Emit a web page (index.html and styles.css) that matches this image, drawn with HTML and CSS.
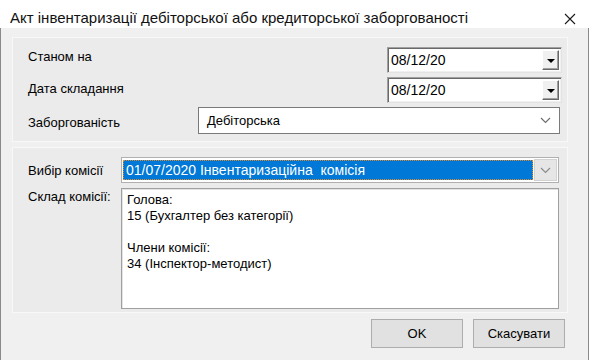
FILE: index.html
```html
<!DOCTYPE html>
<html lang="uk">

<head>
    <meta charset="UTF-8">
    <meta name="viewport" content="width=device-width, initial-scale=1.0">
    <title>Акт інвентаризації</title>
    <link rel="stylesheet" href="styles.css">
</head>

<body>
    <div class="window">
        <div class="titlebar">
            <span class="title">Акт інвентаризації дебіторської або кредиторської заборгованості</span>
            <span class="close">
                <svg width="12" height="12" viewBox="0 0 12 12">
                    <path d="M1 1 L11 11 M11 1 L1 11" stroke="#1a1a1a" stroke-width="1.1" fill="none" />
                </svg>
            </span>
        </div>

        <div class="client">
            <div class="group group-dates">
                <div class="row row-first">
                    <span class="label lbl-1">Станом на</span>
                    <div class="datebox">
                        <span class="date-text">08/12/20</span>
                        <span class="drop-btn"><span class="tri"></span></span>
                    </div>
                </div>
                <div class="row row-next">
                    <span class="label lbl-2">Дата складання</span>
                    <div class="datebox">
                        <span class="date-text">08/12/20</span>
                        <span class="drop-btn"><span class="tri"></span></span>
                    </div>
                </div>
                <div class="row row-combo">
                    <span class="label lbl-3">Заборгованість</span>
                    <div class="combo">
                        <span class="combo-text">Дебіторська</span>
                        <svg class="chevron" width="11" height="7" viewBox="0 0 11 7">
                            <path d="M1 1 L5.5 5.5 L10 1" stroke="#6b6b6b" stroke-width="1.1" fill="none" />
                        </svg>
                    </div>
                </div>
            </div>

            <div class="group group-commission">
                <div class="row">
                    <span class="label wide lbl-4">Вибір комісії</span>
                    <div class="select">
                        <span class="select-value">01/07/2020 Інвентаризаційна  комісія</span>
                        <span class="select-btn">
                            <svg width="11" height="7" viewBox="0 0 11 7">
                                <path d="M1 1 L5.5 5.5 L10 1" stroke="#8a8a8a" stroke-width="1.1" fill="none" />
                            </svg>
                        </span>
                    </div>
                </div>
                <div class="row row-memo">
                    <span class="label wide lbl-5">Склад комісії:</span>
                    <div class="memo">
                        <div>Голова:</div>
                        <div>15 (Бухгалтер без категорії)</div>
                        <div>&nbsp;</div>
                        <div>Члени комісії:</div>
                        <div>34 (Інспектор-методист)</div>
                    </div>
                </div>
            </div>

            <div class="buttons">
                <button class="btn">OK</button>
                <button class="btn">Скасувати</button>
            </div>
        </div>
    </div>
</body>

</html>
```

FILE: styles.css
```css
body {
    margin: 0;
    padding: 0;
    background-color: #ffffff;
    font-family: "Liberation Sans", Arial, sans-serif;
    font-size: 13px;
    color: #000;
    overflow: hidden;
}

.window {
    width: 589px;
    height: 360px;
    display: flex;
    flex-direction: column;
}

.titlebar {
    height: 28px;
    background-color: #ffffff;
    display: flex;
    align-items: flex-start;
    justify-content: space-between;
    box-sizing: border-box;
    padding: 9px 13px 0 10px;
}

.title {
    font-size: 15px;
    line-height: 17px;
    color: #111;
}

.close {
    padding-top: 4px;
    line-height: 0;
}

.client {
    flex-grow: 1;
    background-color: #f0f0f0;
    border-left: 1px solid #8a8a8a;
    border-right: 1px solid #8a8a8a;
    padding: 9px 20px 0 11px;
}

.group {
    box-sizing: border-box;
    width: 556px;
    background-color: #ebebeb;
    border: 1px solid #f8f8f8;
    padding: 9px 5px 0 15px;
}

.group-dates {
    height: 105px;
}

.group-commission {
    height: 166px;
    margin-top: 5px;
}

.row {
    display: flex;
    align-items: flex-start;
}

.row-next {
    margin-top: 4px;
}

.row-combo {
    margin-top: 4px;
}

.row-memo {
    margin-top: 5px;
}

.label {
    line-height: 16px;
    flex-grow: 1;
}

.label.wide {
    flex-grow: 0;
    width: 93px;
}

.lbl-1 { padding-top: 2px; }
.lbl-2 { padding-top: 4px; }
.lbl-3 { padding-top: 8px; }
.lbl-4 { padding-top: 6px; }
.lbl-5 { padding-top: 1px; }

/* date pickers */
.datebox {
    box-sizing: border-box;
    width: 175px;
    height: 26px;
    background-color: #fff;
    border: 1px solid;
    border-color: #a0a0a0 #e3e3e3 #e3e3e3 #a0a0a0;
    box-shadow: inset 1px 1px 0 #696969, inset -1px -1px 0 #f0f0f0;
    display: flex;
    align-items: center;
    justify-content: space-between;
    padding: 0 2px 0 3px;
}

.date-text {
    font-size: 14px;
}

.drop-btn {
    box-sizing: border-box;
    width: 17px;
    height: 20px;
    background-color: #f0f0f0;
    border: 1px solid;
    border-color: #ffffff #696969 #696969 #ffffff;
    box-shadow: inset -1px -1px 0 #a0a0a0;
    display: flex;
    align-items: center;
    justify-content: center;
}

.tri {
    width: 0;
    height: 0;
    border-left: 4px solid transparent;
    border-right: 4px solid transparent;
    border-top: 4px solid #000;
    margin-top: 1px;
}

/* flat combo */
.combo {
    box-sizing: border-box;
    width: 362px;
    height: 27px;
    margin-right: 2px;
    background-color: #fff;
    border: 1px solid #7a7a7a;
    display: flex;
    align-items: center;
    justify-content: space-between;
    padding: 0 8px 0 8px;
}

.combo-text {
    font-size: 13px;
}

/* commission */
.select {
    box-sizing: border-box;
    width: 438px;
    height: 26px;
    background-color: #fff;
    border: 1px solid #b0b0b0;
    display: flex;
    align-items: center;
    padding: 1px;
}

.select-value {
    flex-grow: 1;
    height: 20px;
    box-sizing: border-box;
    background-color: #0078d7;
    color: #fff;
    border: 1px dotted #e08a2a;
    font-size: 14px;
    line-height: 18px;
    padding-left: 2px;
    white-space: pre;
    margin-right: 1px;
}

.select-btn {
    box-sizing: border-box;
    width: 23px;
    height: 22px;
    background-color: #e6e6e6;
    border: 1px solid #d2d2d2;
    display: flex;
    align-items: center;
    justify-content: center;
}

.memo {
    box-sizing: border-box;
    width: 438px;
    height: 121px;
    background-color: #fff;
    border: 1px solid #a0a0a0;
    box-shadow: inset 1px 1px 0 #e3e3e3;
    padding: 3px 5px;
    line-height: 16px;
}

.buttons {
    display: flex;
    justify-content: flex-end;
    gap: 10px;
    width: 553px;
    margin-top: 6px;
}

.btn {
    box-sizing: border-box;
    width: 92px;
    height: 29px;
    background-color: #e1e1e1;
    border: 1px solid #adadad;
    font-family: "Liberation Sans", Arial, sans-serif;
    font-size: 13px;
    color: #000;
    padding: 0;
}
```
